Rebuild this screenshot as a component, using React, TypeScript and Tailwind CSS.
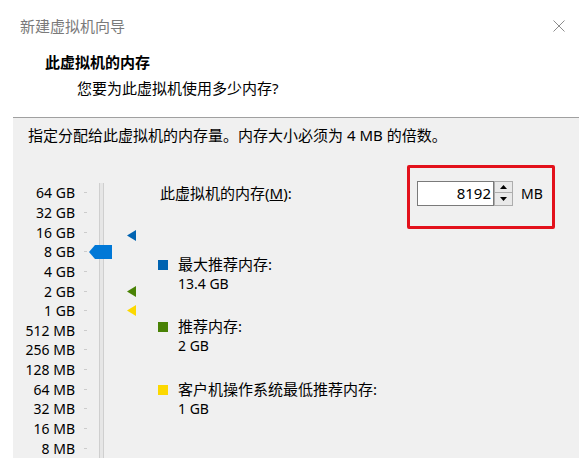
const SCALE = [
  '64 GB', '32 GB', '16 GB', '8 GB', '4 GB', '2 GB', '1 GB',
  '512 MB', '256 MB', '128 MB', '64 MB', '32 MB', '16 MB', '8 MB',
];

const LEGEND = [
  { color: 'bg-[#0063b1]', label: '最大推荐内存:', value: '13.4 GB', gap: 'mt-[52px]' },
  { color: 'bg-[#498205]', label: '推荐内存:', value: '2 GB', gap: 'mt-[24px]' },
  { color: 'bg-[#fcd800]', label: '客户机操作系统最低推荐内存:', value: '1 GB', gap: 'mt-[25px]' },
];

function Marker({ color, top }: { color: string; top: string }) {
  return (
    <svg className={`absolute left-[23px] ${top}`} width="9" height="11" viewBox="0 0 9 11">
      <polygon points="0,5.5 9,0 9,11" fill={color} />
    </svg>
  );
}

export default function App() {
  return (
    <div className="w-[587px] h-[466px] bg-white overflow-hidden text-black font-['Noto_Sans','Noto_Sans_CJK_SC',sans-serif]">
      {/* Header */}
      <div className="h-[117px]">
        <div className="flex items-center justify-between pl-[20px] pr-[22px] pt-[16px]">
          <span className="text-[15px] leading-[20px] text-[#7a7a7a]">新建虚拟机向导</span>
          <svg width="12" height="12" viewBox="0 0 12 12">
            <path d="M0.5 0.5 L11.5 11.5 M11.5 0.5 L0.5 11.5" stroke="#8c8c8c" strokeWidth="1" />
          </svg>
        </div>
        <div className="pl-[45px] mt-[16px] text-[15px] leading-[20px] font-bold">此虚拟机的内存</div>
        <div className="pl-[77px] mt-[6px] text-[15px] leading-[20px]">您要为此虚拟机使用多少内存?</div>
      </div>

      {/* Body panel */}
      <div className="ml-[13px] mr-[8px] h-[341px] border-t border-[#a0a0a0] bg-[#f0f0f0]">
        <div className="pl-[15px] pt-[8px] text-[15px] leading-[18px]">
          指定分配给此虚拟机的内存量。内存大小必须为 4 MB 的倍数。
        </div>

        <div className="flex mt-[39px] h-[275px]">
          {/* Slider scale */}
          <div className="flex w-[145px]">
            <div className="flex flex-col">
              {SCALE.map((s) => (
                <div key={s} className="flex items-center h-[19.7px]">
                  <span className="w-[62px] text-right text-[14px] leading-[19px]">{s}</span>
                  <span className="ml-[9px] w-[3px] h-px bg-[#cccccc]" />
                </div>
              ))}
            </div>
            <div className="relative ml-[12px] h-full">
              <div className="w-[5px] h-full bg-[#e6e6e6] border-x border-[#cfcfcf]" />
              <svg className="absolute left-[-10px] top-[62px]" width="23" height="14" viewBox="0 0 23 14">
                <polygon points="0,7 6,0 23,0 23,14 6,14" fill="#0078d7" />
              </svg>
            </div>
            <div className="relative flex-1">
              <Marker color="#0063b1" top="top-[47px]" />
              <Marker color="#498205" top="top-[103px]" />
              <Marker color="#fcd800" top="top-[122px]" />
            </div>
          </div>

          {/* Right side */}
          <div className="flex flex-col text-[15px] leading-[19px]">
            <div className="flex items-center h-[20px]">
              <span className="w-[259px] pl-[2px] leading-[20px]">
                此虚拟机的内存(<span className="underline">M</span>):
              </span>
              <div className="relative flex items-center">
                <div className="absolute left-[-10px] top-[-16px] w-[148px] h-[64px] border-[3px] border-[#e3111b] rounded-[2px]" />
                <div className="w-[77px] h-[25px] bg-white border border-[#7a7a7a] flex items-center justify-end pr-[2px] text-[15px]">
                  8192
                </div>
                <div className="flex flex-col w-[19px] h-[25px]">
                  <div className="h-[12.5px] bg-[#e9e9e9] border border-[#adadad] flex items-center justify-center">
                    <svg width="7" height="4" viewBox="0 0 7 4">
                      <polygon points="0,4 3.5,0 7,4" fill="#000" />
                    </svg>
                  </div>
                  <div className="h-[12.5px] bg-[#e9e9e9] border border-t-0 border-[#adadad] flex items-center justify-center">
                    <svg width="7" height="4" viewBox="0 0 7 4">
                      <polygon points="0,0 7,0 3.5,4" fill="#000" />
                    </svg>
                  </div>
                </div>
                <span className="ml-[8px] text-[14px]">MB</span>
              </div>
            </div>

            {LEGEND.map((l) => (
              <div key={l.label} className={l.gap}>
                <div className="flex items-center">
                  <span className={`w-[10px] h-[10px] ${l.color}`} />
                  <span className="ml-[10px]">{l.label}</span>
                </div>
                <div className="pl-[20px] text-[14px]">{l.value}</div>
              </div>
            ))}
          </div>
        </div>
      </div>
    </div>
  );
}
